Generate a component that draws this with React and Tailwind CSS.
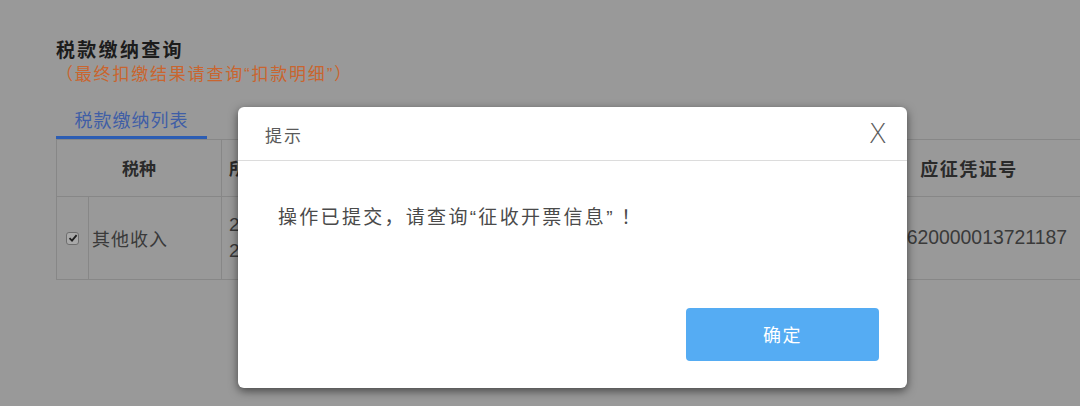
import React from "react";

const font = { fontFamily: '"Noto Sans CJK SC", "Noto Sans", sans-serif' };
const latin = { fontFamily: '"Liberation Sans", sans-serif' };

export default function App() {
  return (
    <div
      className="relative w-[1080px] h-[406px] overflow-hidden bg-[#999999]"
      style={font}
    >
      {/* page underneath */}
      <div className="pl-[56px] pt-[37px]">
        <div className="text-[19px] leading-[24px] font-bold text-[#1c1c1c] tracking-[2.3px]">
          税款缴纳查询
        </div>
        <div className="text-[17px] leading-[24px] text-[#c9652f] tracking-[1.8px]">
          （最终扣缴结果请查询<span style={latin}>“</span>扣款明细<span style={latin}>”</span>）
        </div>
        <div className="mt-[20px] w-[151px] border-b-[3px] border-[#2c5db3] pb-[5px] text-center text-[18px] leading-[24px] text-[#3f5ea6] tracking-[1px]">
          税款缴纳列表
        </div>
        <div className="border-t border-l border-[#878787] text-[#2a2a2a]">
          {/* header row */}
          <div className="flex h-[57px] border-b border-[#878787]">
            <div className="w-[165px] shrink-0 flex items-center justify-center border-r border-[#878787] text-[17px] font-bold">
              税种
            </div>
            <div className="flex-1 flex items-center pl-[7px] text-[17px] font-bold border-r border-[#878787]">
              所属期
            </div>
            <div className="w-[210px] shrink-0 flex items-center justify-center pr-[12px] text-[18px] font-bold tracking-[1.5px]">
              应征凭证号
            </div>
          </div>
          {/* data row */}
          <div className="flex h-[83px] border-b border-[#878787]">
            <div className="w-[32px] shrink-0 flex items-center justify-center border-r border-[#878787]">
              <div className="w-[13px] h-[13px] rounded-[3px] border border-[#6e6e6e] bg-[#a9a9a9] flex items-center justify-center">
                <svg width="10" height="10" viewBox="0 0 10 10">
                  <path d="M1.5 5.2 L4 7.6 L8.6 2.2" fill="none" stroke="#1f1f1f" strokeWidth="1.8" />
                </svg>
              </div>
            </div>
            <div className="w-[133px] shrink-0 flex items-center pl-[3px] border-r border-[#878787] text-[18px] text-[#3a3a3a] tracking-[1px]">
              其他收入
            </div>
            <div
              className="flex-1 flex flex-col justify-center pl-[7px] text-[19px] leading-[26px] text-[#3a3a3a] border-r border-[#878787]"
              style={latin}
            >
              <div>2021-01-01</div>
              <div>2021-01-31</div>
            </div>
            <div
              className="w-[210px] shrink-0 flex items-center justify-end pr-[13px] text-[19.4px] text-[#3a3a3a]"
              style={latin}
            >
              34620000013721187
            </div>
          </div>
        </div>
      </div>

      {/* dialog */}
      <div className="absolute left-[238px] top-[107px] w-[669px] h-[281px] bg-white rounded-[6px] shadow-[0_3px_10px_rgba(0,0,0,0.55)] flex flex-col">
        <div className="h-[54px] shrink-0 flex items-center justify-between pl-[27px] pr-[20px] border-b border-[#dcdcdc]">
          <span className="text-[17px] text-[#5a5a5a] pt-[2px] tracking-[2px]">提示</span>
          <span
            className="text-[27px] leading-none text-[#5c5c5c]"
            style={{ fontFamily: '"DejaVu Sans", sans-serif', fontWeight: 200 }}
          >
            X
          </span>
        </div>
        <div className="flex-1 pl-[40px] pt-[41px] text-[19px] leading-[28px] text-[#4a4a4a] tracking-[2.3px]">
          操作已提交，请查询<span style={latin}>“</span>征收开票信息<span style={latin}>”</span> ！
        </div>
        <div className="flex justify-end pr-[28px] pb-[27px]">
          <div className="w-[193px] h-[53px] rounded-[4px] bg-[#55acf3] flex items-center justify-center text-white text-[18px] tracking-[1.5px]">
            确定
          </div>
        </div>
      </div>
    </div>
  );
}
